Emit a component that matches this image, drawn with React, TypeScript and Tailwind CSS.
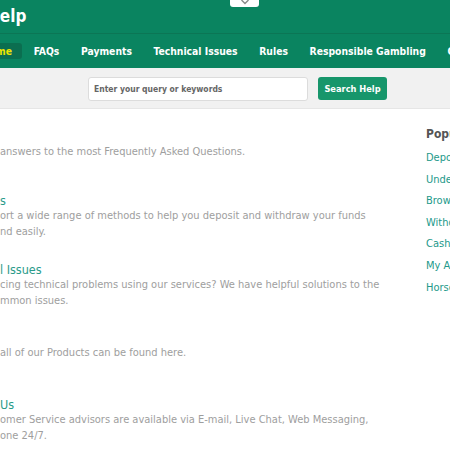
const navItems = ["FAQs", "Payments", "Technical Issues", "Rules", "Responsible Gambling", "Contact Us"];

const sections = [
  { title: "", lines: ["answers to the most Frequently Asked Questions."], cls: "mt-[20px] h-[64px]" },
  { title: "s", lines: ["ort a wide range of methods to help you deposit and withdraw your funds", "nd easily."], cls: "h-[69px]" },
  { title: "l Issues", lines: ["cing technical problems using our services? We have helpful solutions to the", "mmon issues."], cls: "h-[68px]" },
  { title: "", lines: ["all of our Products can be found here."], cls: "h-[67px]" },
  { title: "Us", lines: ["omer Service advisors are available via E-mail, Live Chat, Web Messaging,", "one 24/7."], cls: "h-[67px]" },
];

const popular = ["Deposits", "Understanding Bets", "Browser Settings", "Withdrawals", "Cash Out", "My Account", "Horse Racing"];

const font = { fontFamily: '"DejaVu Sans Condensed", "Liberation Sans", sans-serif' };

export default function App() {
  return (
    <div className="relative w-[450px] h-[450px] overflow-hidden bg-white" style={font}>
      {/* header */}
      <div className="relative h-[34px] bg-[#0a8460] border-b border-[#0b7655]">
        <h1 className="-ml-[13px] pt-[6px] text-[17px] leading-[20px] font-bold text-white">Help</h1>
        <div className="absolute left-[230px] top-0 w-[29px] h-[7px] bg-white rounded-b-[3px] flex justify-center">
          <svg width="10" height="6" viewBox="0 0 10 6" className="-mt-[1px]">
            <path d="M1.5 1l3.5 3.5L8.5 1" fill="none" stroke="#8a8a8a" strokeWidth="1.4" />
          </svg>
        </div>
      </div>

      {/* nav */}
      <nav className="h-[34px] bg-[#0a8460] flex items-center -ml-[28px] gap-[1.6px] whitespace-nowrap">
        <span className="px-[10px] h-[16px] leading-[16px] rounded-[3px] bg-[#0b6e50] text-[10.3px] font-bold text-[#ece400]">Home</span>
        {navItems.map((item) => (
          <span key={item} className="px-[10px] text-[10.3px] leading-[17px] font-bold text-white">{item}</span>
        ))}
      </nav>

      {/* search */}
      <div className="h-[41px] bg-[#f1f1f1] border-b border-[#e6e6e6] flex items-start pt-[9px]">
        <div className="ml-[88px] w-[220px] h-[24px] bg-white border border-[#dcdcdc] rounded-[3px] flex items-center px-[5px]">
          <span className="text-[8.5px] font-bold text-[#666]">Enter your query or keywords</span>
        </div>
        <button className="ml-[10px] w-[69px] h-[23px] bg-[#17966b] rounded-[3px] text-[9.2px] font-bold text-white">Search Help</button>
      </div>

      {/* body */}
      <div className="flex">
        <div className="w-[426px] shrink-0 whitespace-nowrap">
          {sections.map((s, i) => (
            <div key={i} className={s.cls}>
              <div className="h-[15px] leading-[15px] text-[12.5px] text-[#2a9b8a]">{s.title}</div>
              {s.lines.map((l) => (
                <div key={l} className="text-[11px] leading-[15.5px] text-[#9e9e9e]">{l}</div>
              ))}
            </div>
          ))}
        </div>
        <div className="pt-[17px] whitespace-nowrap">
          <h3 className="text-[12px] leading-[16px] font-bold text-[#555]">Popular Topics</h3>
          <ul className="mt-[8px] flex flex-col">
            {popular.map((p) => (
              <li key={p} className="h-[21.6px] leading-[16px] text-[11px] text-[#23998a]">{p}</li>
            ))}
          </ul>
        </div>
      </div>
    </div>
  );
}
